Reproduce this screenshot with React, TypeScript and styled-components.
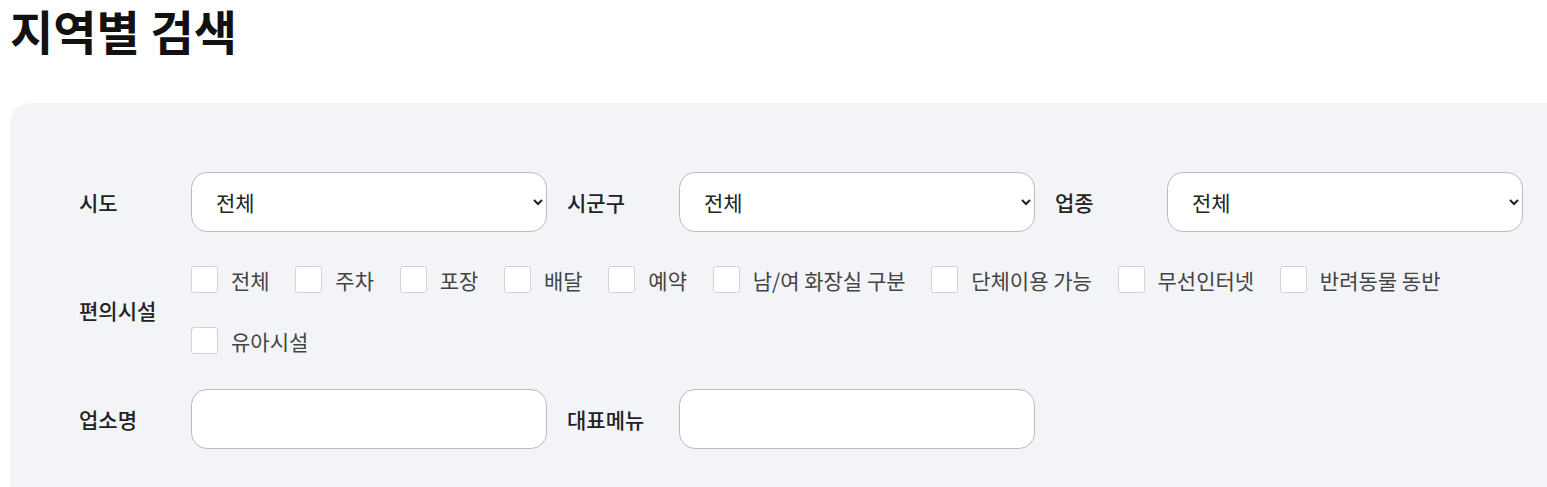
import styled, { createGlobalStyle } from 'styled-components';

const GlobalStyle = createGlobalStyle`
  html, body {
    margin: 0;
    padding: 0;
    overflow: hidden;
    background: #ffffff;
  }
  body {
    font-family: "Noto Sans CJK KR", "Noto Sans", sans-serif;
    color: #222;
  }
`;

const Page = styled.div`
  padding: 0 0 0 10px;
`;

const Title = styled.h1`
  margin: 0;
  height: 103px;
  font-size: 47px;
  font-weight: 700;
  color: #111;
  line-height: 60px;
`;

const Panel = styled.section`
  margin-right: -40px;
  background: #f3f4f8;
  border-radius: 20px 0 0 0;
  padding: 69px 69px 80px;
  display: flex;
  flex-direction: column;
  gap: 17px;
`;

const Row = styled.div<{ $tall?: boolean }>`
  display: flex;
  align-items: center;
  gap: 20px;
  padding-bottom: ${({ $tall }) => ($tall ? '1px' : '0')};
`;

const Field = styled.div<{ $grow?: boolean }>`
  display: flex;
  align-items: center;
  flex: ${({ $grow }) => ($grow ? '1' : 'none')};
`;

const Label = styled.label`
  width: 112px;
  flex: none;
  font-size: 21px;
  font-weight: 500;
  color: #222;
`;

const Select = styled.select`
  width: 356px;
  height: 60px;
  padding: 0 20px 0 20px;
  border: 1px solid #bcbcbc;
  border-radius: 16px;
  background: #fff;
  font-family: inherit;
  font-size: 21px;
  color: #222;
  box-sizing: border-box;
`;

const TextInput = styled.input`
  width: 356px;
  height: 60px;
  padding: 0 20px;
  border: 1px solid #bcbcbc;
  border-radius: 16px;
  background: #fff;
  font-family: inherit;
  font-size: 21px;
  box-sizing: border-box;
  outline: none;
`;

const CheckWrap = styled.div`
  display: flex;
  flex-wrap: wrap;
  width: 1332px;
  column-gap: 25.7px;
`;

const CheckItem = styled.label`
  display: flex;
  align-items: center;
  gap: 13px;
  height: 61px;
  font-size: 21px;
  color: #444;
`;

const Box = styled.input`
  appearance: none;
  margin: 0;
  width: 27px;
  height: 27px;
  background: #fff;
  border: 1px solid #d2d2d2;
  border-radius: 3px;
  box-sizing: border-box;
`;

const facilities = ['전체', '주차', '포장', '배달', '예약', '남/여 화장실 구분', '단체이용 가능', '무선인터넷', '반려동물 동반', '유아시설'];

const SelectField = ({ label }: { label: string }) => (
  <Field>
    <Label>{label}</Label>
    <Select defaultValue="all">
      <option value="all">전체</option>
    </Select>
  </Field>
);

export default function App() {
  return (
    <Page>
      <GlobalStyle />
      <Title>지역별 검색</Title>
      <Panel>
        <Row>
          <SelectField label="시도" />
          <SelectField label="시군구" />
          <SelectField label="업종" />
        </Row>
        <Row $tall>
          <Field $grow>
            <Label>편의시설</Label>
            <CheckWrap>
              {facilities.map((f) => (
                <CheckItem key={f}>
                  <Box type="checkbox" />
                  {f}
                </CheckItem>
              ))}
            </CheckWrap>
          </Field>
        </Row>
        <Row>
          <Field>
            <Label>업소명</Label>
            <TextInput type="text" />
          </Field>
          <Field>
            <Label>대표메뉴</Label>
            <TextInput type="text" />
          </Field>
        </Row>
      </Panel>
    </Page>
  );
}
